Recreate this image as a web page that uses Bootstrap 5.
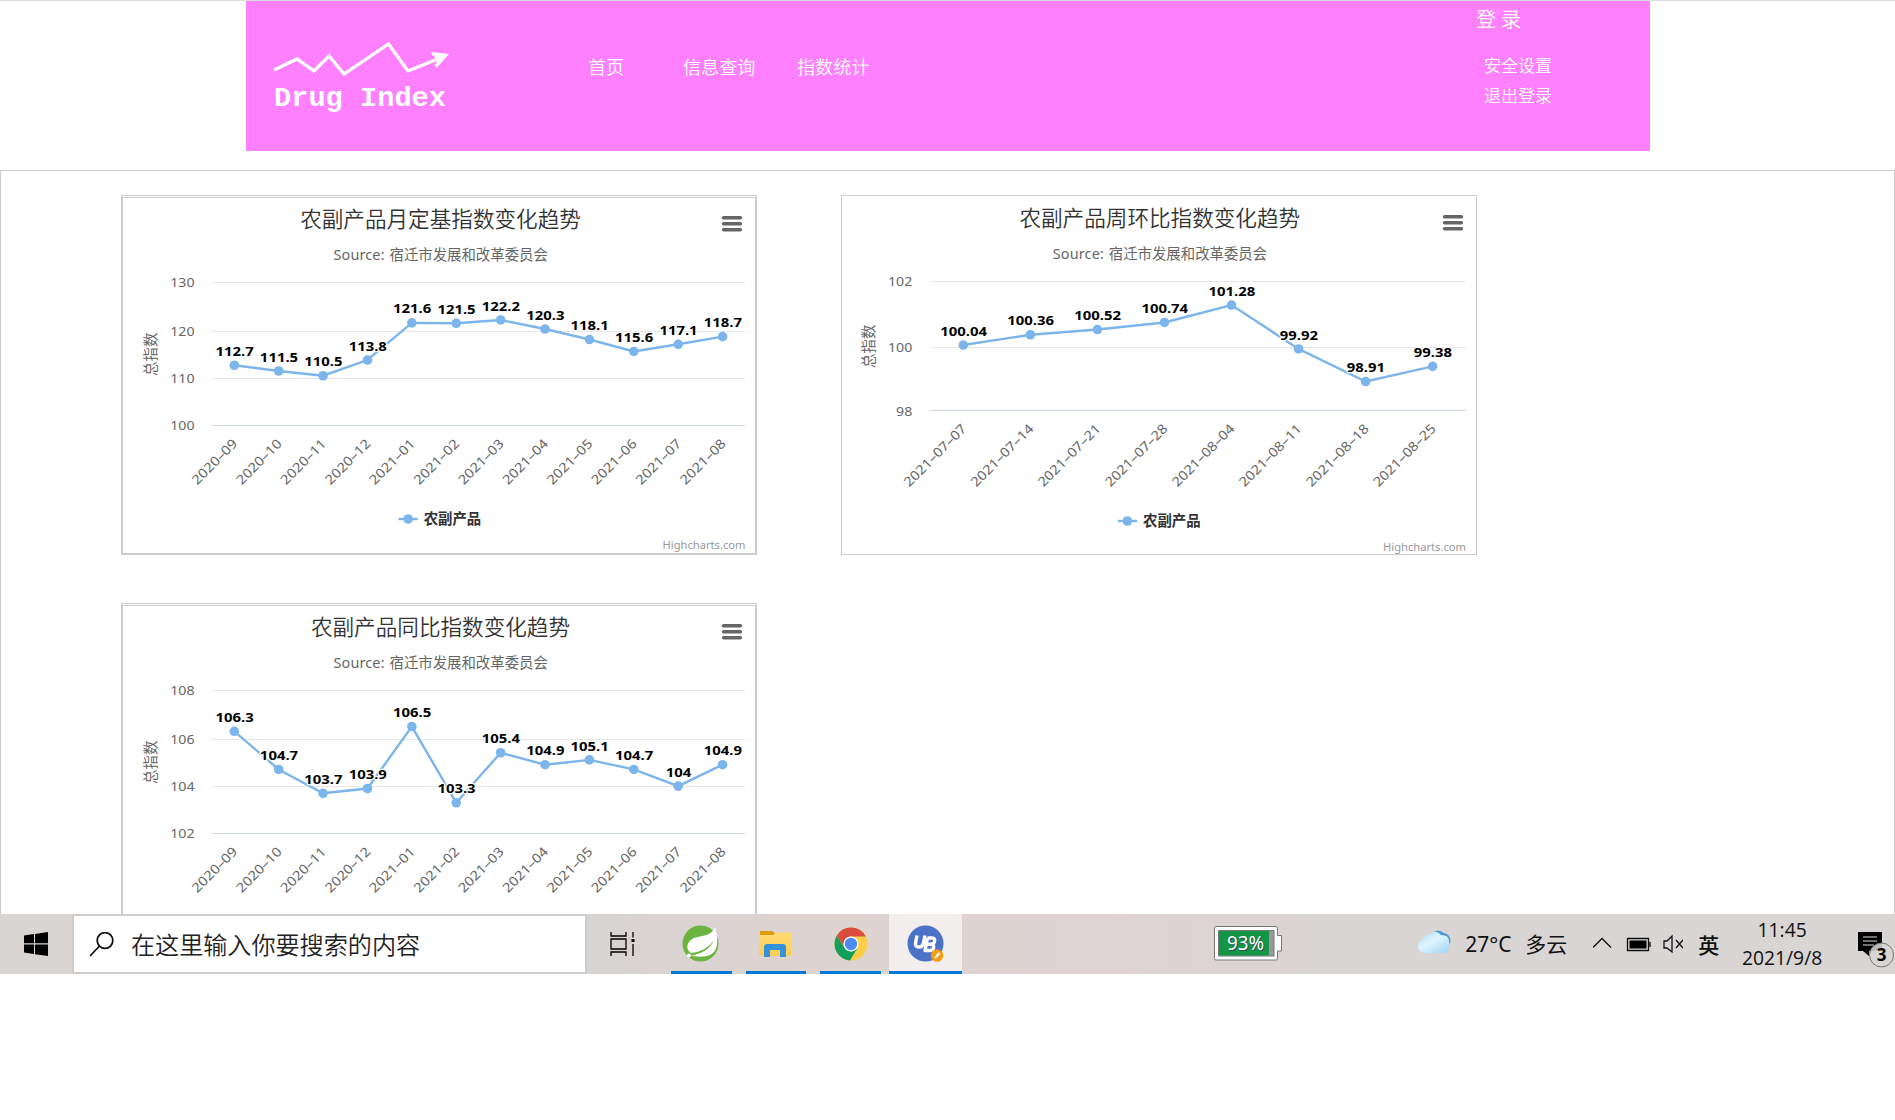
<!DOCTYPE html>
<html lang="zh-CN">
<head>
<meta charset="utf-8">
<meta name="viewport" content="width=device-width, initial-scale=1">
<title>Drug Index</title>
<link href="https://cdn.jsdelivr.net/npm/bootstrap@5.3.0/dist/css/bootstrap.min.css" rel="stylesheet">
<style>
body{font-family:"Noto Sans","Noto Sans CJK SC",sans-serif;background:#fff;overflow:hidden}
.page-top{border-top:1px solid #dadada;height:170px}
.site-header{width:1404px;height:150px;margin-left:246px;background:#ff80ff;color:#fff;font-family:"Noto Sans CJK SC",sans-serif;font-weight:350}
.site-header a{color:#fff;text-decoration:none;white-space:nowrap}
.brand-logo{width:190px;height:90px;margin:30px 0 0 20px}
.brand-logo text{font-family:"Liberation Mono",monospace;font-weight:700;font-size:28px;fill:#fff}
.main-nav{margin:52px 0 0 132px;font-size:18.1px;line-height:27px}
.main-nav a{display:block}
.user-menu{width:174px;font-size:17px;line-height:30px}
.user-menu .login-link{font-size:20.3px;line-height:30px;margin:2px 0 17px;display:block}
.user-menu .sub-link{display:block;padding-left:8px}
.board{height:744px;border:1px solid #ccc;border-bottom:0;padding:24px 0 0 120px;column-gap:84px;row-gap:48px;align-content:flex-start}
.chart-box{width:636px;height:360px;border:1px solid #ccc;flex:none}
.chart-inner{width:634px;height:358px;overflow:visible;display:block}
.chart-inner text{font-family:"Noto Sans","Noto Sans CJK SC",sans-serif}
.t-title{font-size:21.6px;fill:#333;font-weight:350}
.t-sub{font-size:14.4px;fill:#666}
.t-axis{font-size:13.2px;fill:#666}
.t-data{font-size:13.2px;font-weight:700;fill:#000;stroke:#fff;stroke-width:2.4px;paint-order:stroke;stroke-linejoin:round}
.t-legend{font-size:14.4px;font-weight:700;fill:#333}
.t-credit{font-size:10.8px;fill:#999}
.taskbar{height:60px;background:linear-gradient(90deg,#d9d5d3 0,#d8d4d2 32%,#ddd3d1 42%,#ded3d2 56%,#d9d5d4 70%,#d8d5d4 100%);color:#111;position:relative;z-index:2}
.start-btn{width:72px}
.search-box{width:515px;border:2px solid #ccc;background:#fff;padding-left:15px;font:350 24.1px/1 "Noto Sans CJK SC",sans-serif;color:#222}
.search-box svg{margin-right:17px}
.search-box span{padding-top:1px}
.task-view{width:72px}
.app-btn{width:61px;border-bottom:3px solid #0078d7;padding-top:3px}
.app-active{width:73px;background:#f2eeed}
.weather{font:400 21px/1 "Noto Sans","Noto Sans CJK SC",sans-serif;margin-left:136px;width:152px}
.ime{font:500 21px/1 "Noto Sans CJK SC",sans-serif;width:21px;margin-left:15px}
.clock{font:400 19.3px/28px "Open Sans",sans-serif;width:86px;margin-left:20px;text-align:center}
</style>
</head>
<body>
<div class="page-top">
  <header class="site-header d-flex align-items-start">
    <svg class="brand-logo" viewBox="266 31 190 90">
      <path d="M274 70L297 59L314 71L329 56L344 74L388.5 44L408 71L440 58" fill="none" stroke="#fff" stroke-width="3.300"/>
      <path d="M431.500 52L449 54L437 67.500L434.500 66L438 59.500L432 55Z" fill="#fff"/>
      <text x="274" y="105.700" textLength="172" lengthAdjust="spacingAndGlyphs">Drug Index</text>
    </svg>
    <nav class="main-nav d-flex">
      <a href="#" style="width:95px">首页</a><a href="#" style="width:114px">信息查询</a><a href="#">指数统计</a>
    </nav>
    <div class="user-menu ms-auto">
      <a class="login-link" href="#">登 录</a>
      <a class="sub-link" href="#">安全设置</a>
      <a class="sub-link" href="#">退出登录</a>
    </div>
  </header>
</div>
<main class="board d-flex flex-wrap overflow-hidden">
  <section class="chart-box"><svg class="chart-inner" id="chart-base"></svg></section>
  <section class="chart-box"><svg class="chart-inner" id="chart-week"></svg></section>
  <section class="chart-box"><svg class="chart-inner" id="chart-year"></svg></section>
</main>
<footer class="taskbar d-flex">
  <div class="start-btn d-flex align-items-center justify-content-center">
    <svg width="24" height="24"><path d="M0 3.500L10 2V11.200H0ZM11 1.900L24 0V11.200H11ZM0 12.500H10V22L0 20.500ZM11 12.500H24V24L11 22.200Z"/></svg>
  </div>
  <div class="search-box d-flex align-items-center">
    <svg width="25" height="25" fill="none" stroke="#111" stroke-width="1.8"><ellipse cx="16" cy="8.500" rx="7.800" ry="7.800"/><path d="M10.500 14L1 24"/></svg>
    <span>在这里输入你要搜索的内容</span>
  </div>
  <div class="task-view d-flex align-items-center justify-content-center">
    <svg width="25" height="24" fill="none" stroke="#000" stroke-width="1.300"><path d="M1 0V4H16V0M1 24V20H16V24M1 7H16V17H1ZM23 0V5.500M23 12V24"/><path d="M21.500 7H24.500V10H21.500Z" fill="#000" stroke="none"/></svg>
  </div>
  <div class="app-btn d-flex align-items-center justify-content-center" style="margin-left:12px">
    <svg width="38" height="38"><circle cx="18.500" cy="18.500" r="18" fill="#6db33f"/><path d="M33 2C37 17 37 30 22 31.500C16 32 12 31 8 31C18 29 28 25 32 15C27 23 18 27 9 28C4 25 4 19 9 15C16 9 28 14 33 2Z" fill="#fff"/><circle cx="7" cy="30.500" r="2" fill="#fff"/></svg>
  </div>
  <div class="app-btn d-flex align-items-center justify-content-center" style="margin-left:14px">
    <svg width="33" height="28"><defs><linearGradient id="folder" x2="0" y2="1"><stop stop-color="#ffda72"/><stop offset="1" stop-color="#fbcd55"/></linearGradient></defs><path d="M1 1H13L16 3V8H1Z" fill="#dd9b05"/><path d="M0 5H14L17 2.500H32V26H0Z" fill="url(#folder)"/><path d="M5 27V17Q5 14 8 14H24Q27 14 27 17V27H21V20H11V27Z" fill="#3492dc"/></svg>
  </div>
  <div class="app-btn d-flex align-items-center justify-content-center" style="margin-left:14px">
    <svg width="34" height="34"><circle cx="17" cy="17" r="16.500" fill="#ffcd46"/><path d="M2.700 8.800A16.500 16.500 0 0 1 31.800 9.500H17A7.500 7.500 0 0 0 9.800 19.500Z" fill="#db4c3f"/><path d="M2.700 8.800A16.500 16.500 0 0 0 16 33.500L23.500 21L17 24.500L10.500 20.800Z" fill="#12a05c"/><circle cx="17" cy="17" r="7.500" fill="#fff"/><circle cx="17" cy="17" r="6.200" fill="#4c8bf5"/></svg>
  </div>
  <div class="app-btn app-active d-flex align-items-center justify-content-center" style="margin-left:8px">
    <svg width="38" height="38"><circle cx="18.500" cy="18.500" r="18" fill="#4c72c8"/><g fill="none" stroke="#fff" stroke-width="3.400" stroke-linejoin="round"><path d="M10 10.500L8.500 18Q8 22 12 22Q15.500 22 16.500 18L18 10.500"/><path d="M20.500 13H25Q28.500 13 27.500 16.500Q27 19 24 19.300H20.500M24 19.300Q27.500 20 26.500 23Q26 25.500 22.500 25.500H18L20.500 13"/></g><circle cx="30" cy="30.500" r="6.300" fill="#f39c12"/><path d="M28 33L32.500 28" stroke="#fff" stroke-width="2.200"/></svg>
  </div>
  <svg width="68" height="35" style="margin:12px 0 0 252px"><path d="M2 .500H62Q63.500 .500 63.500 2V9.500H67.500V25H63.500V32.500Q63.500 34 62 34H2Q.500 34 .500 32.500V2Q.500 .500 2 .500Z" fill="#fff" stroke="#777"/><path d="M4.500 4.500H60V30H4.500Z" fill="#999" stroke="#777"/><path d="M5 5H55V29.500H5Z" fill="#149647"/><text x="13" y="23.500" font-family="Noto Sans" font-size="19" fill="#fff" textLength="37" lengthAdjust="spacingAndGlyphs" style="text-shadow:1px 1px 1px #345">93%</text></svg>
  <div class="weather d-flex align-items-center">
    <svg width="33" height="24" style="margin:-4px 14px 0 0" class="flex-shrink-0"><defs><linearGradient id="cloud" x2=".8" y2="1"><stop stop-color="#a9dcfb"/><stop offset=".5" stop-color="#e0f4fe"/><stop offset="1" stop-color="#a6d7f6"/></linearGradient></defs><path d="M14 3Q20-2 26 3Q34 5 32 14L22 15Z" fill="#4d97d2"/><path d="M7 23Q0 22 0 16Q0 11 5 10Q6 4 11 5Q17-2 23 5Q31 5 31 11Q34 20 26 23Z" fill="url(#cloud)"/></svg>
    <span style="width:60px">27°C</span><span class="text-nowrap">多云</span>
  </div>
  <svg width="90" height="60" style="margin-left:23px" fill="none" stroke="#111" stroke-width="1.300"><path d="M0 33.500L9 24.500L18 33.500"/><path d="M34.500 24.500H55.500V36.500H34.500ZM57 28V33"/><path d="M36.500 26.500H53.500V34.500H36.500Z" fill="#000" stroke="none"/><path d="M71 27H74L79 22V38L74 34H71ZM83 26L90 34M90 26L83 34"/></svg>
  <div class="ime d-flex align-items-center"><span>英</span></div>
  <div class="clock"><div style="margin-top:2px">11:45</div><div>2021/9/8</div></div>
  <svg width="70" height="60"><path d="M33 18H57V37H44V42L38 37H33Z"/><path d="M38 23H52M38 27H52M38 31H49" stroke="#ddd" stroke-width="1.200"/><circle cx="56.500" cy="41" r="12" fill="#d7d5d4" fill-opacity=".88" stroke="#777"/><text x="56.500" y="47" text-anchor="middle" font-family="Noto Sans" font-size="17" font-weight="700">3</text></svg>
</footer>
<script src="https://cdn.jsdelivr.net/npm/bootstrap@5.3.0/dist/js/bootstrap.bundle.min.js"></script>
<script>
const months = ['2020-09','2020-10','2020-11','2020-12','2021-01','2021-02','2021-03','2021-04','2021-05','2021-06','2021-07','2021-08'];
const monthly = {framed:true, legend:true, dx:0, dy:0, left:90.3, right:623, x0:112.3, step:44.39, ticksRight:72.5,
  titleX:28, titleMid:158.3, menuX:601.5, legendY:323, creditY:352.5, creditX:623.5, labelLen:58, cats:months, gridY:[229.8,182.3,135.5,86.8]};
const charts = {
  'chart-base': {...monthly, title:'农副产品月定基指数变化趋势', ticks:[100,110,120,130], values:[112.7,111.5,110.5,113.8,121.6,121.5,122.2,120.3,118.1,115.6,117.1,118.7]},
  'chart-year': {...monthly, legend:false, title:'农副产品同比指数变化趋势', ticks:[102,104,106,108], values:[106.3,104.7,103.7,103.9,106.5,103.3,105.4,104.9,105.1,104.7,104,104.9]},
  'chart-week': {framed:false, legend:true, dx:-.7, dy:-1, left:88.7, right:624, x0:121.3, step:67.05, ticksRight:70.3,
    titleX:26, titleMid:150.3, menuX:602.5, legendY:325, creditY:354.5, creditX:624, labelLen:82, gridY:[214.9,151.5,85.8],
    title:'农副产品周环比指数变化趋势', ticks:[98,100,102], cats:['2021-07-07','2021-07-14','2021-07-21','2021-07-28','2021-08-04','2021-08-11','2021-08-18','2021-08-25'],
    values:[100.04,100.36,100.52,100.74,101.28,99.92,98.91,99.38]}
};
function draw(id, c) {
  const cx = 318.5 + c.dx, lo = c.ticks[0], hi = c.ticks[c.ticks.length-1];
  const y0 = c.gridY[0], y1 = c.gridY[c.gridY.length-1];
  const pts = c.values.map((v,i) => [c.x0 + i*c.step, y0 - (v-lo)/(hi-lo)*(y0-y1)]);
  let s = c.framed ? '<rect x=".5" y="1.5" width="633" height="356" fill="none" stroke="#ccc"/>' : '';
  s += `<text class="t-title" x="${cx}" y="${31+c.dy}" text-anchor="middle">${c.title}</text>`;
  s += `<text class="t-sub" x="${cx-107}" y="${64+c.dy}" textLength="51">Source:</text><text class="t-sub" x="${cx-51}" y="${64+c.dy}">宿迁市发展和改革委员会</text>`;
  for (const k of [0,6,12]) s += `<path d="M${c.menuX} ${21.7+k+c.dy}h17" stroke="#666" stroke-width="3.4" stroke-linecap="round"/>`;
  c.ticks.forEach((t,i) => {
    const y = Math.floor(c.gridY[i]) + .5, w = String(t).length*8.1;
    s += `<path d="M${c.left} ${y}H${c.right}" stroke="${i ? '#e6e6e6' : '#ccd6eb'}" stroke-width="1.2"/>`;
    s += `<text class="t-axis" x="${c.ticksRight-w}" y="${c.gridY[i]+4.6}" textLength="${w}" lengthAdjust="spacingAndGlyphs">${t}</text>`;
  });
  s += `<text class="t-sub" text-anchor="middle" transform="translate(${c.titleX+5.5} ${c.titleMid}) rotate(-90)">总指数</text>`;
  s += `<polyline points="${pts.map(p=>p.join()).join(' ')}" fill="none" stroke="#7cb5ec" stroke-width="2.4"/>`;
  pts.forEach(([x,y],i) => {
    s += `<circle cx="${x}" cy="${y}" r="4.8" fill="#7cb5ec"/>`;
    s += `<text class="t-axis" transform="translate(${x+4} ${y0+18.7}) rotate(-45)" x="${-c.labelLen}" textLength="${c.labelLen}" lengthAdjust="spacingAndGlyphs">${c.cats[i].replace(/-/g,'–')}</text>`;
  });
  pts.forEach(([x,y],i) => {
    const v = String(c.values[i]), w = v.replace('.','').length*8.5 + (v.includes('.') ? 4.2 : 0);
    s += `<text class="t-data" x="${x+.3-w/2}" y="${y-9.4}" textLength="${w}" lengthAdjust="spacingAndGlyphs">${v}</text>`;
  });
  if (c.legend) {
    const lx = 276.5 + c.dx;
    s += `<path d="M${lx} ${c.legendY}h19.2" stroke="#7cb5ec" stroke-width="2.4"/><circle cx="${lx+9.6}" cy="${c.legendY}" r="4.8" fill="#7cb5ec"/>`;
    s += `<text class="t-legend" x="${lx+25.2}" y="${c.legendY+5.3}">农副产品</text>`;
    s += `<text class="t-credit" x="${c.creditX-83}" y="${c.creditY}" textLength="83" lengthAdjust="spacingAndGlyphs">Highcharts.com</text>`;
  }
  document.getElementById(id).innerHTML = s;
}
for (const id in charts) draw(id, charts[id]);
</script>
</body>
</html>
